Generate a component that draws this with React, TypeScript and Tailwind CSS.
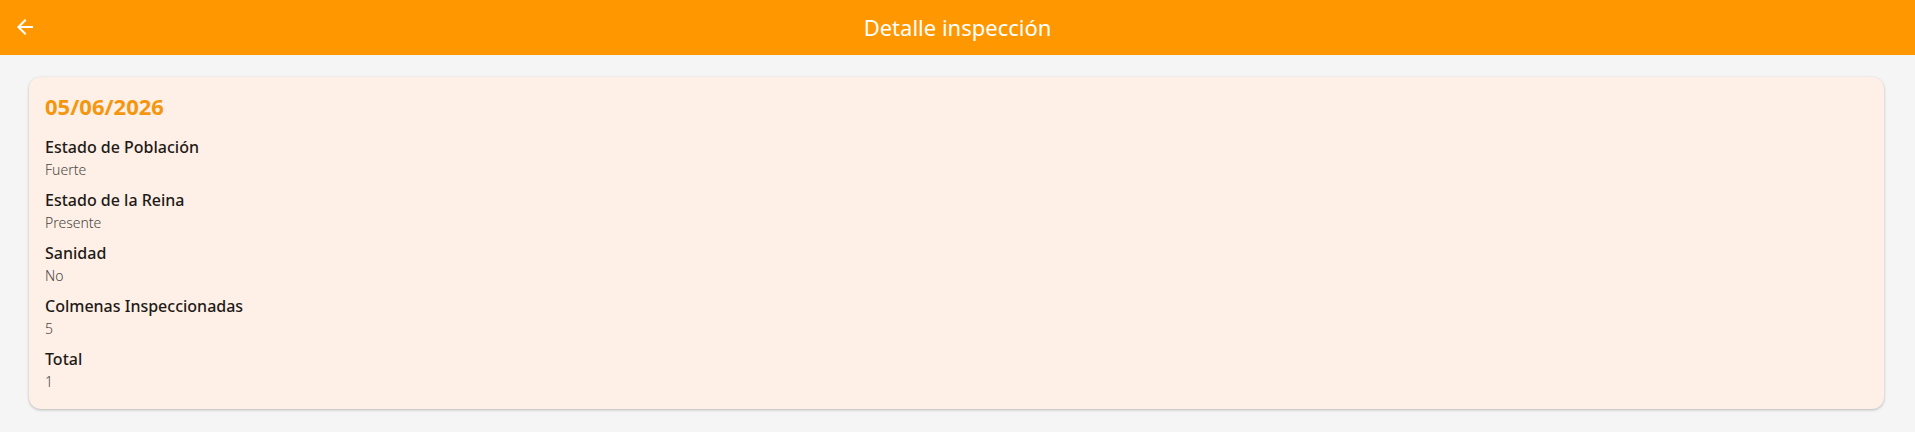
import React from "react";

type Field = {
  label: string;
  value: string;
};

const fields: Field[] = [
  { label: "Estado de Población", value: "Fuerte" },
  { label: "Estado de la Reina", value: "Presente" },
  { label: "Sanidad", value: "No" },
  { label: "Colmenas Inspeccionadas", value: "5" },
  { label: "Total", value: "1" },
];

const BackIcon = () => (
  <svg width="24" height="24" viewBox="0 0 24 24" fill="white">
    <path d="M20 11H7.83l5.59-5.59L12 4l-8 8 8 8 1.41-1.41L7.83 13H20v-2z" />
  </svg>
);

const App = () => {
  return (
    <div
      className="min-h-[432px] bg-[#f5f5f5]"
      style={{ fontFamily: '"Noto Sans", "Open Sans", sans-serif' }}
    >
      {/* app bar */}
      <div className="relative flex items-center justify-center h-[55px] bg-[#ff9800]">
        <button className="absolute left-[13px] top-[15px] cursor-pointer">
          <BackIcon />
        </button>
        <h1 className="text-[22px] text-white font-normal">Detalle inspección</h1>
      </div>

      <div className="pt-[22px] pl-[29px] pr-[31px]">
        <div className="rounded-xl bg-[#fef0e7] px-4 pt-[14px] pb-[16px] shadow-[0_1px_3px_rgba(0,0,0,0.25)]">
          <p className="text-[22px] leading-[30px] font-bold text-[#f5960f] mb-[14px]">
            05/06/2026
          </p>
          <div className="flex flex-col gap-[7px]">
            {fields.map((f) => (
              <div key={f.label}>
                <p className="text-[16px] leading-[24px] font-medium text-[#1f1a17]">
                  {f.label}
                </p>
                <p className="text-[14px] leading-[22px] font-light text-[#4a4542]">
                  {f.value}
                </p>
              </div>
            ))}
          </div>
        </div>
      </div>
    </div>
  );
};

export default App;
